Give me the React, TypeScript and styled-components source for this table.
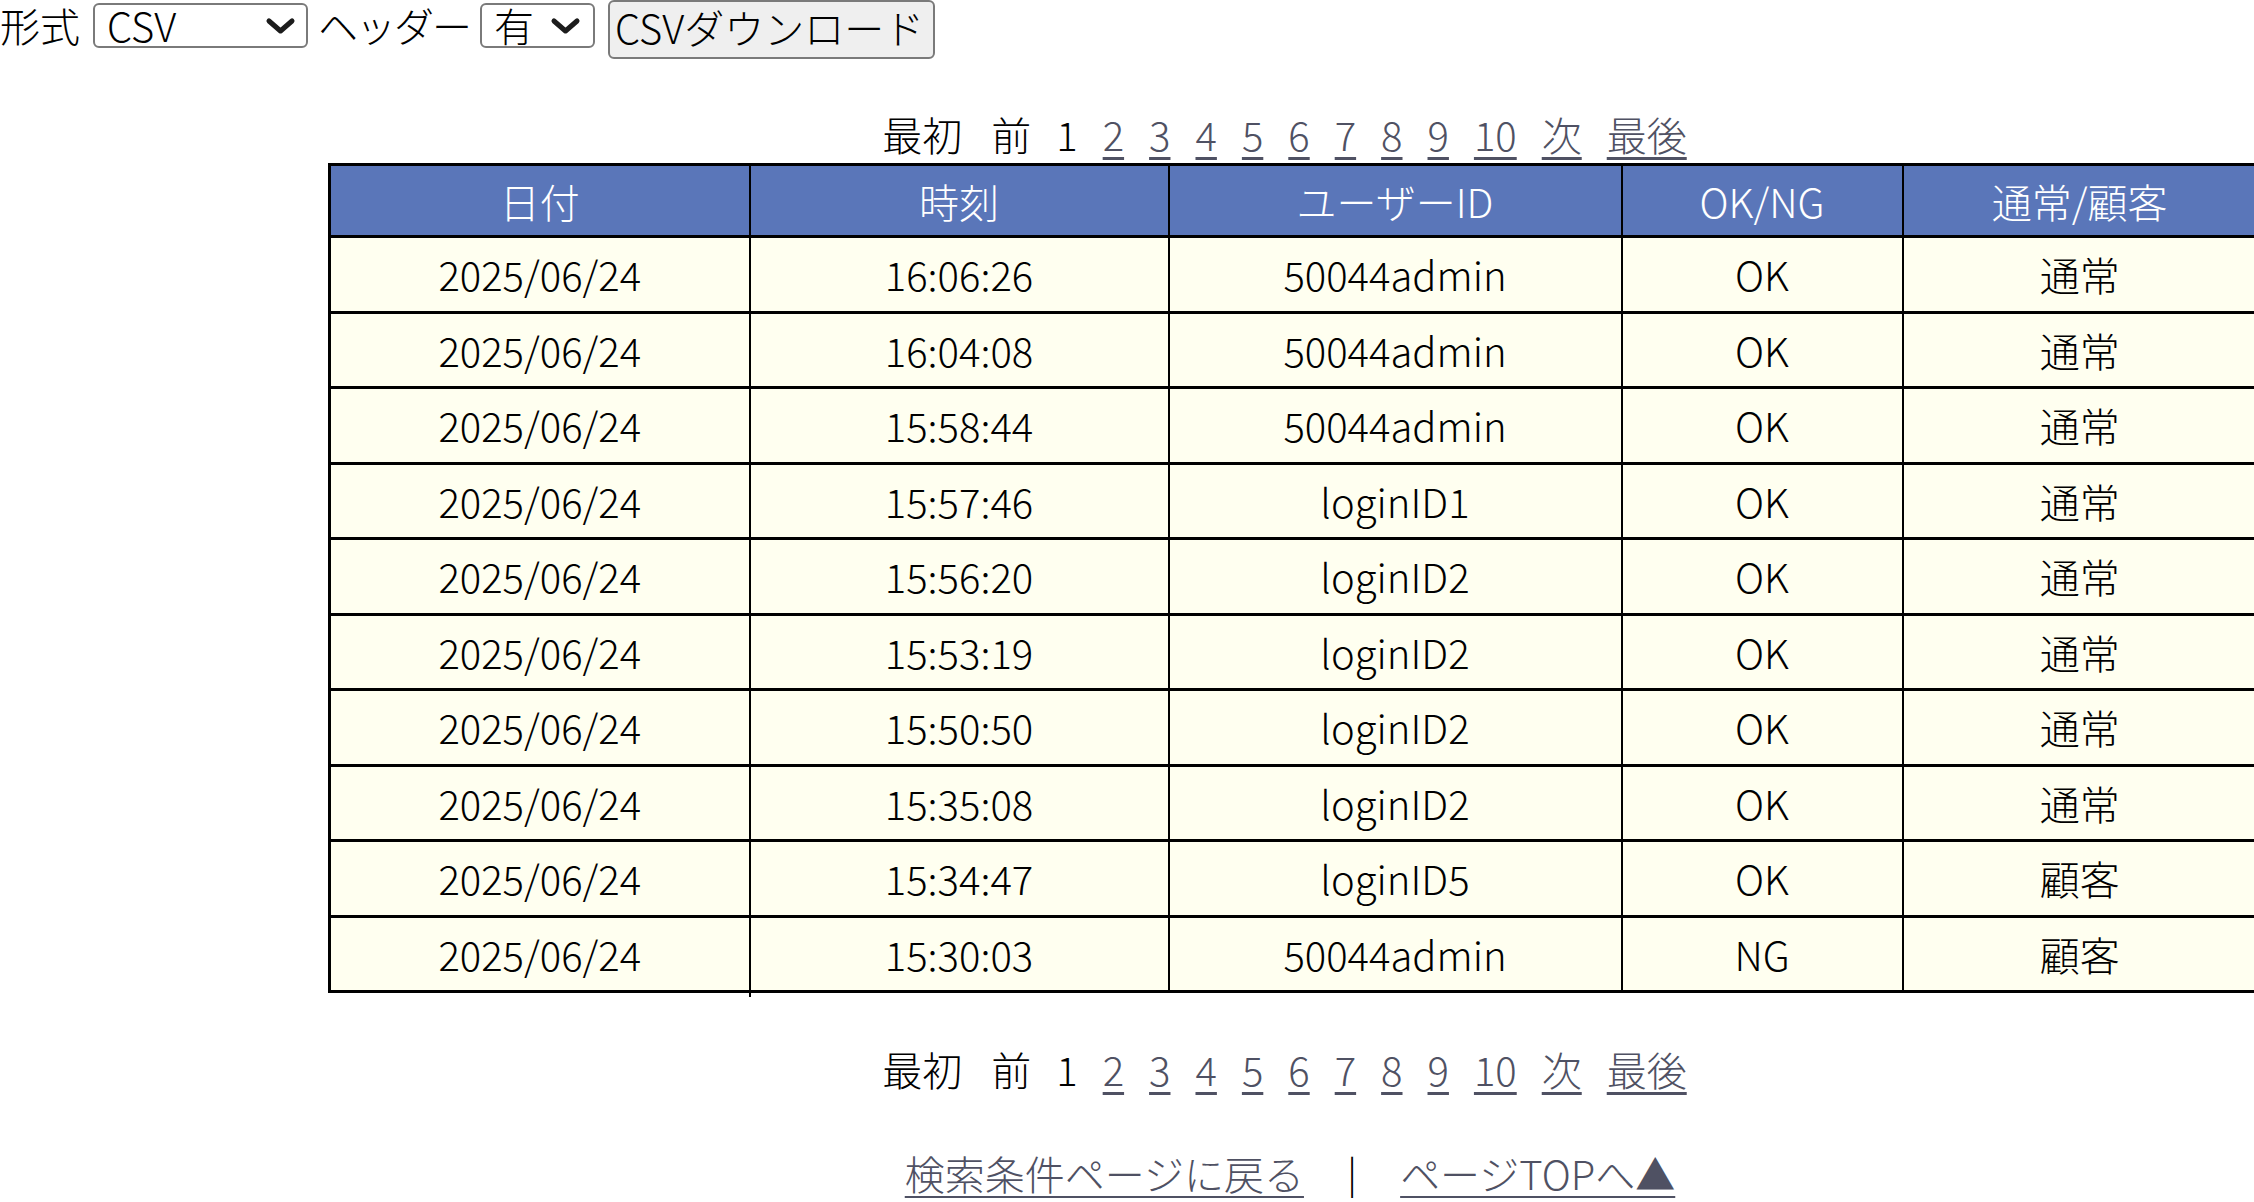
import React from "react";
import styled, { createGlobalStyle } from "styled-components";

const GlobalStyle = createGlobalStyle`
  html, body {
    margin: 0;
    padding: 0;
    overflow: hidden;
    background: #ffffff;
  }
  body {
    font-family: "Noto Sans CJK JP Light", "Noto Sans CJK JP", "Noto Sans", sans-serif;
    font-weight: 300;
    font-size: 40px;
    color: #000000;
  }
`;

const FONT = `"Noto Sans CJK JP Light", "Noto Sans CJK JP", "Noto Sans", sans-serif`;

const Page = styled.div`
  width: 2569px;
`;

const ExportBar = styled.form`
  display: flex;
  align-items: flex-start;
  height: 62px;
  gap: 10px;
  margin: 0;
`;

const BarLabel = styled.span<{ $after?: number; $tight?: boolean }>`
  display: block;
  line-height: 50px;
  height: 50px;
  font-size: 40px;
  letter-spacing: ${(p) => (p.$tight ? "-2px" : "0")};
  margin-right: ${(p) => p.$after ?? 0}px;
`;

const SelectWrap = styled.div<{ $w: number }>`
  position: relative;
  width: ${(p) => p.$w}px;
  height: 45px;
  margin-top: 3px;
`;

const Select = styled.select`
  display: block;
  appearance: none;
  -webkit-appearance: none;
  width: 100%;
  height: 100%;
  box-sizing: border-box;
  border: 2px solid #7a7a7a;
  border-radius: 6px;
  background: #ffffff;
  padding: 0 0 0 12px;
  margin: 0;
  font-family: ${FONT};
  font-weight: 300;
  font-size: 40px;
  line-height: 41px;
  color: #000000;
`;

const Chevron = styled.svg<{ $right: number }>`
  position: absolute;
  right: ${(p) => p.$right}px;
  top: 14px;
  width: 31px;
  height: 18px;
  pointer-events: none;
`;

const DownloadButton = styled.button`
  display: block;
  height: 59px;
  box-sizing: border-box;
  padding: 2px 9px 7px 5px;
  margin: 0 0 0 3px;
  border: 2px solid #7a7a7a;
  border-radius: 6px;
  background: #efefef;
  font-family: ${FONT};
  font-weight: 300;
  font-size: 40px;
  line-height: 46px;
  color: #000000;
`;

const Results = styled.div`
  display: flex;
  flex-direction: column;
  align-items: center;
`;

const Pager = styled.nav<{ $top: number }>`
  display: flex;
  align-items: flex-start;
  gap: 25px;
  height: 48px;
  line-height: 48px;
  margin-top: ${(p) => p.$top}px;
  white-space: nowrap;
`;

const PagerText = styled.span<{ $after?: number }>`
  color: #000000;
  margin-right: ${(p) => p.$after ?? 0}px;
`;

const PagerLink = styled.a`
  color: #4f5163;
  text-decoration: underline;
  text-decoration-thickness: 3px;
  text-underline-offset: 6px;
  cursor: pointer;
`;

const LogTable = styled.table`
  align-self: flex-start;
  margin-left: 328px;
  margin-top: 5px;
  width: 1928px;
  table-layout: fixed;
  border-collapse: collapse;
  border: 3px solid #000000;
`;

const HeadCell = styled.th`
  height: 69px;
  padding: 0;
  background: #5a76b9;
  color: #ffffff;
  font-weight: 300;
  font-size: 40px;
  text-align: center;
  border: 2px solid #000000;
  border-bottom-width: 3px;
`;

const BodyRow = styled.tr`
  &:last-child td:first-child::after {
    content: "";
    position: absolute;
    right: -2px;
    bottom: -7px;
    width: 2px;
    height: 5px;
    background: #000000;
  }
`;

const Cell = styled.td`
  position: relative;
  height: 72.5px;
  padding: 0;
  background: #fffff0;
  font-size: 40px;
  text-align: center;
  border: 2px solid #000000;
  border-top-width: 3px;
`;

const FooterLinks = styled.div`
  display: flex;
  align-items: flex-start;
  gap: 43px;
  height: 50px;
  line-height: 50px;
  margin-top: 55px;
  margin-left: 11px;
  white-space: nowrap;
`;

const Separator = styled.span`
  color: #000000;
`;

const columns = [
  { title: "日付", width: 420 },
  { title: "時刻", width: 419 },
  { title: "ユーザーID", width: 453 },
  { title: "OK/NG", width: 281 },
  { title: "通常/顧客", width: 355 },
];

const rows = [
  ["2025/06/24", "16:06:26", "50044admin", "OK", "通常"],
  ["2025/06/24", "16:04:08", "50044admin", "OK", "通常"],
  ["2025/06/24", "15:58:44", "50044admin", "OK", "通常"],
  ["2025/06/24", "15:57:46", "loginID1", "OK", "通常"],
  ["2025/06/24", "15:56:20", "loginID2", "OK", "通常"],
  ["2025/06/24", "15:53:19", "loginID2", "OK", "通常"],
  ["2025/06/24", "15:50:50", "loginID2", "OK", "通常"],
  ["2025/06/24", "15:35:08", "loginID2", "OK", "通常"],
  ["2025/06/24", "15:34:47", "loginID5", "OK", "顧客"],
  ["2025/06/24", "15:30:03", "50044admin", "NG", "顧客"],
];

const ChevronIcon = ({ right }: { right: number }) => (
  <Chevron $right={right} viewBox="0 0 31 18">
    <polyline
      points="4,4 15.5,14 27,4"
      fill="none"
      stroke="#1c1c1c"
      strokeWidth="5"
      strokeLinecap="round"
      strokeLinejoin="round"
    />
  </Chevron>
);

const PagerBar = ({ top }: { top: number }) => (
  <Pager $top={top}>
    <PagerText $after={4}>最初</PagerText>
    <PagerText>前</PagerText>
    <PagerText>1</PagerText>
    {[2, 3, 4, 5, 6, 7, 8, 9, 10].map((n) => (
      <PagerLink key={n}>{n}</PagerLink>
    ))}
    <PagerLink>次</PagerLink>
    <PagerLink>最後</PagerLink>
  </Pager>
);

export default function App() {
  return (
    <>
      <GlobalStyle />
      <Page>
        <ExportBar>
          <BarLabel $after={3}>形式</BarLabel>
          <SelectWrap $w={215}>
            <Select defaultValue="csv">
              <option value="csv">CSV</option>
            </Select>
            <ChevronIcon right={12} />
          </SelectWrap>
          <BarLabel $tight>ヘッダー</BarLabel>
          <SelectWrap $w={115}>
            <Select defaultValue="yes">
              <option value="yes">有</option>
            </Select>
            <ChevronIcon right={14} />
          </SelectWrap>
          <DownloadButton type="button">CSVダウンロード</DownloadButton>
        </ExportBar>
        <Results>
          <PagerBar top={48} />
          <LogTable>
            <colgroup>
              {columns.map((c) => (
                <col key={c.title} style={{ width: c.width }} />
              ))}
            </colgroup>
            <thead>
              <tr>
                {columns.map((c) => (
                  <HeadCell key={c.title}>{c.title}</HeadCell>
                ))}
              </tr>
            </thead>
            <tbody>
              {rows.map((r, i) => (
                <BodyRow key={i}>
                  {r.map((v, j) => (
                    <Cell key={j}>{v}</Cell>
                  ))}
                </BodyRow>
              ))}
            </tbody>
          </LogTable>
          <PagerBar top={52} />
          <FooterLinks>
            <PagerLink>検索条件ページに戻る</PagerLink>
            <Separator>|</Separator>
            <PagerLink>ページTOPへ▲</PagerLink>
          </FooterLinks>
        </Results>
      </Page>
    </>
  );
}
